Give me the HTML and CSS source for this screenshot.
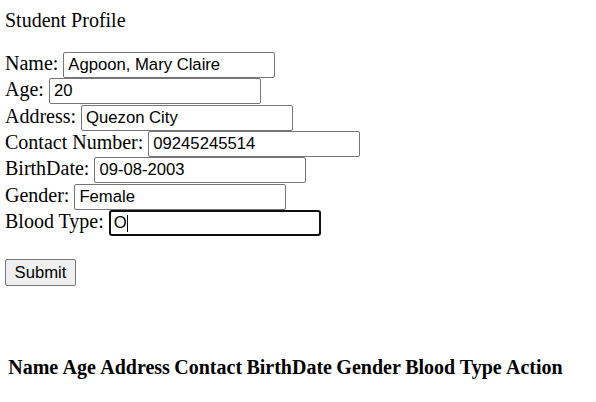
FILE: index.html
```html
<!DOCTYPE html>
<html>
<head>
<meta charset="utf-8">
<link rel="stylesheet" href="styles.css">
</head>
<body>
<div class="title">Student Profile</div>
<form class="form">
  <div class="row"><label>Name:</label><input class="field" type="text" value="Agpoon, Mary Claire"></div>
  <div class="row"><label>Age:</label><input class="field" type="text" value="20"></div>
  <div class="row"><label>Address:</label><input class="field" type="text" value="Quezon City"></div>
  <div class="row"><label>Contact Number:</label><input class="field" type="text" value="09245245514"></div>
  <div class="row"><label>BirthDate:</label><input class="field" type="text" value="09-08-2003"></div>
  <div class="row"><label>Gender:</label><input class="field" type="text" value="Female"></div>
  <div class="row"><label>Blood Type:</label><span class="focus-wrap"><input class="field focused" type="text" value="O"><span class="caret"></span></span></div>
  <div class="actions"><button class="submit" type="button">Submit</button></div>
</form>
<table class="records">
  <thead>
    <tr><th>Name</th><th>Age</th><th>Address</th><th>Contact</th><th>BirthDate</th><th>Gender</th><th>Blood Type</th><th>Action</th></tr>
  </thead>
</table>
</body>
</html>
```

FILE: styles.css
```css
html, body {
  background: #ffffff;
}
body {
  margin: 0;
  padding: 9px 0 0 5px;
  font-family: "Liberation Serif", "Times New Roman", serif;
  font-size: 20px;
  color: #000;
}
.title {
  height: 23px;
  line-height: 23px;
}
.form {
  margin-top: 20px;
}
.row {
  display: flex;
  align-items: baseline;
  height: 26.33px;
}
.row label {
  margin-right: 5px;
}
.field {
  box-sizing: border-box;
  width: 212px;
  height: 26px;
  margin: 0;
  padding: 1px 4px;
  border: 1px solid #767676;
  border-radius: 2px;
  font-family: "Liberation Sans", Arial, sans-serif;
  font-size: 16.67px;
  color: #000;
  background: #fff;
  outline: none;
}
.focus-wrap {
  position: relative;
  display: inline-block;
}
.field.focused {
  border: 2px solid #101010;
  border-radius: 3px;
  padding: 1px 3px;
}
.caret {
  position: absolute;
  left: 18px;
  top: 5px;
  width: 1px;
  height: 17px;
  background: #000;
}
.actions {
  margin-top: 23px;
}
.submit {
  box-sizing: border-box;
  height: 27px;
  width: 71px;
  padding: 1px 8px;
  margin: 0;
  border: 1px solid #767676;
  border-radius: 2px;
  background: #efefef;
  font-family: "Liberation Sans", Arial, sans-serif;
  font-size: 16.67px;
  color: #000;
}
.records {
  margin-top: 67px;
  border-spacing: 2px;
  font-size: 20px;
}
.records th {
  padding: 1px 1.2px;
  font-weight: bold;
}
```
